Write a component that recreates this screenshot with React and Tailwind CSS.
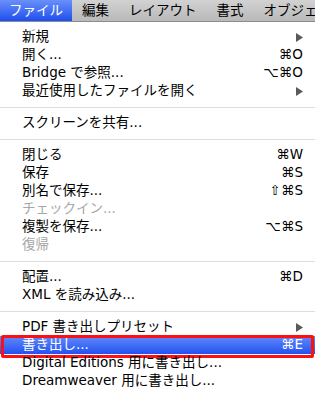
import React from 'react'

const bar = ['ファイル', '編集', 'レイアウト', '書式', 'オブジェクト']

const groups = [
  [
    { label: '新規', sub: true },
    { label: '開く...', key: '⌘O' },
    { label: 'Bridge で参照...', key: '⌥⌘O' },
    { label: '最近使用したファイルを開く', sub: true },
  ],
  [{ label: 'スクリーンを共有...' }],
  [
    { label: '閉じる', key: '⌘W' },
    { label: '保存', key: '⌘S' },
    { label: '別名で保存...', key: '⇧⌘S' },
    { label: 'チェックイン...', off: true },
    { label: '複製を保存...', key: '⌥⌘S' },
    { label: '復帰', off: true },
  ],
  [
    { label: '配置...', key: '⌘D' },
    { label: 'XML を読み込み...' },
  ],
  [
    { label: 'PDF 書き出しプリセット', sub: true },
    { label: '書き出し...', key: '⌘E', active: true },
    { label: 'Digital Editions 用に書き出し...' },
    { label: 'Dreamweaver 用に書き出し...' },
  ],
]

function Arrow({ color = '#5a5a5a' }) {
  return (
    <svg width="7" height="9" viewBox="0 0 7 9">
      <path d="M0 0 L7 4.5 L0 9 Z" fill={color} />
    </svg>
  )
}

function Item({ item }) {
  const text = item.active ? 'text-white' : item.off ? 'text-[#a6a6a6]' : 'text-black'
  return (
    <div className={`relative h-[18px] flex items-center justify-between pl-[22px] pr-[12px] ${text} ${item.active ? 'bg-gradient-to-b from-[#6489fb] to-[#2350f0]' : ''}`}>
      <span className="whitespace-nowrap">{item.label}</span>
      {item.key && <span className="whitespace-nowrap">{item.key}</span>}
      {item.sub && <Arrow />}
      {item.active && (
        <div className="absolute -top-[1px] -bottom-[4px] left-[1px] right-[1px] border-[3px] border-[#ff1010] rounded-[2px]" />
      )}
    </div>
  )
}

export default function App() {
  return (
    <div className="w-[315px] h-[401px] overflow-hidden bg-white text-[13.5px] leading-none"
      style={{ fontFamily: '"DejaVu Sans", "Noto Sans CJK JP", sans-serif' }}>
      <div className="h-[22px] flex items-stretch overflow-hidden bg-gradient-to-b from-[#d2d2d2] to-[#b9b9b9] border-b border-[#8c8c8c] text-[13.5px] text-black whitespace-nowrap">
        {bar.map((b, i) => (
          <div key={b}
            className={i === 0
              ? 'shrink-0 px-[9px] flex items-center text-white bg-gradient-to-b from-[#6a8ff9] to-[#1f4cee]'
              : 'shrink-0 px-[10px] flex items-center'}>
            {b}
          </div>
        ))}
      </div>
      <div className="pt-[6px]">
        {groups.map((g, gi) => (
          <div key={gi}>
            {gi > 0 && (
              <div className="h-[14px] flex items-center">
                <div className="w-full h-px bg-[#dedede]" />
              </div>
            )}
            {g.map(it => <Item key={it.label} item={it} />)}
          </div>
        ))}
      </div>
    </div>
  )
}
